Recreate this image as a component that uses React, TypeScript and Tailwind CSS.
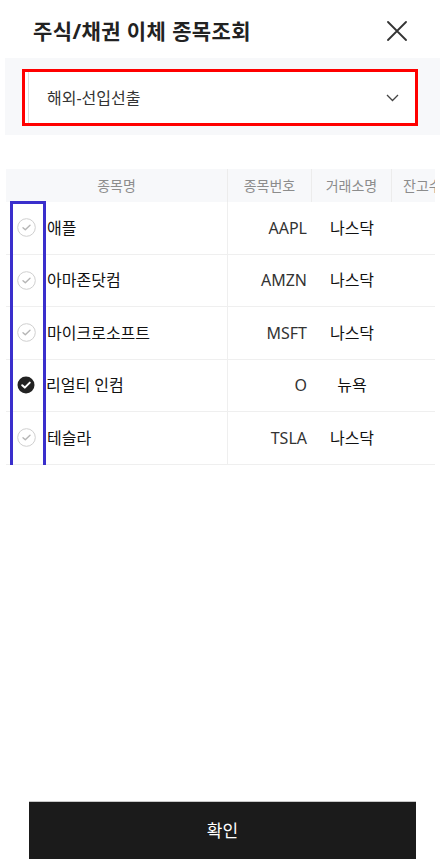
import React from "react";

const rows = [
  { name: "애플", code: "AAPL", ex: "나스닥", checked: false },
  { name: "아마존닷컴", code: "AMZN", ex: "나스닥", checked: false },
  { name: "마이크로소프트", code: "MSFT", ex: "나스닥", checked: false },
  { name: "리얼티 인컴", code: "O", ex: "뉴욕", checked: true },
  { name: "테슬라", code: "TSLA", ex: "나스닥", checked: false },
];

function CheckIcon({ checked }: { checked: boolean }) {
  if (checked) {
    return (
      <svg width="18" height="18" viewBox="0 0 18 18">
        <circle cx="9" cy="9" r="8.5" fill="#222222" />
        <path d="M5.2 9.2 L7.8 11.6 L12.8 6.6" fill="none" stroke="#ffffff" strokeWidth="2" strokeLinecap="round" strokeLinejoin="round" />
      </svg>
    );
  }
  return (
    <svg width="19" height="19" viewBox="0 0 19 19">
      <circle cx="9.5" cy="9.5" r="8.8" fill="#ffffff" stroke="#cfcfcf" strokeWidth="1" />
      <path d="M6 9.7 L8.3 11.8 L13 7.3" fill="none" stroke="#b5b5b5" strokeWidth="1.4" strokeLinecap="round" strokeLinejoin="round" />
    </svg>
  );
}

export default function App() {
  return (
    <div
      className="w-[445px] h-[866px] bg-white flex flex-col text-[#222]"
      style={{ fontFamily: '"Noto Sans", "Noto Sans CJK KR", sans-serif' }}
    >
      {/* Header */}
      <div className="h-[58px] pt-[4px] pl-[33px] pr-[38px] flex items-center justify-between">
        <h1 className="text-[21px] font-bold leading-none tracking-[0.4px] text-[#222]">주식/채권 이체 종목조회</h1>
        <svg width="20" height="20" viewBox="0 0 20 20">
          <path d="M1 1 L19 19 M19 1 L1 19" stroke="#333" strokeWidth="1.8" strokeLinecap="round" />
        </svg>
      </div>

      {/* Select box */}
      <div className="mx-[5px] bg-[#f7f8fa] pl-[17px] pr-[22px] pt-[11px] pb-[9px]">
        <div className="border-[3px] border-[#ff0000] bg-white h-[57px] pl-[3px] flex">
          <div className="flex-1 border-l border-[#dddddd] flex items-center justify-between pl-[18px] pr-[16px]">
            <span className="text-[16px] text-[#333]">해외-선입선출</span>
            <svg width="13" height="8" viewBox="0 0 13 8">
              <path d="M1 1 L6.5 6.5 L12 1" fill="none" stroke="#444" strokeWidth="1.3" />
            </svg>
          </div>
        </div>
      </div>

      {/* Table */}
      <div className="mt-[34px] ml-[6px] w-[429px] overflow-hidden relative">
        <div className="w-[480px]">
          <div className="flex h-[33px] bg-[#f7f8fa] text-[14px] text-[#8c8c8c]">
            <div className="w-[222px] flex items-center justify-center border-r border-[#ececec]">종목명</div>
            <div className="w-[84px] flex items-center justify-center border-r border-[#ececec]">종목번호</div>
            <div className="w-[80px] flex items-center justify-center border-r border-[#ececec]">거래소명</div>
            <div className="flex-1 flex items-center pl-[11px]">잔고수량</div>
          </div>
          {rows.map((r) => (
            <div key={r.name} className="flex h-[52.5px] border-b border-[#efefef]">
              <div className="w-[222px] flex items-center pl-[11px] gap-[11px] border-r border-[#efefef]">
                <CheckIcon checked={r.checked} />
                <span className="text-[16px] font-normal text-[#111]">{r.name}</span>
              </div>
              <div className="w-[84px] flex items-center justify-end pr-[5px] text-[16px] text-[#333]">{r.code}</div>
              <div className="w-[80px] flex items-center justify-center text-[16px] font-normal text-[#111]">{r.ex}</div>
              <div className="flex-1" />
            </div>
          ))}
        </div>
        {/* annotation */}
        <div className="absolute left-[4px] top-[32px] w-[36px] h-[269px] border-[3px] border-[#3a2fcc] pointer-events-none" />
      </div>

      <div className="flex-1" />

      {/* Button */}
      <button className="mx-[29px] mb-[7px] h-[58px] bg-[#1b1b1b] border-t border-[#c8c8c8] text-white text-[17px] font-normal flex items-center justify-center">
        확인
      </button>
    </div>
  );
}
